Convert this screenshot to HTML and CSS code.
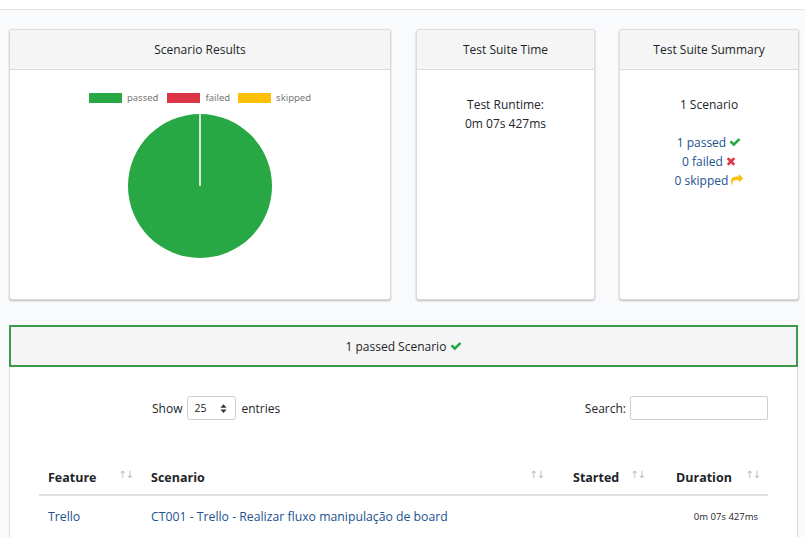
FILE: index.html
```html
<!DOCTYPE html>
<html>
<head>
<meta charset="utf-8">
<link rel="stylesheet" href="styles.css">
</head>
<body>
<div class="topbar"></div>
<div class="summary-row">
  <div class="card card-results">
    <div class="card-header">Scenario Results</div>
    <div class="card-body chart-body">
      <div class="legend">
        <span class="swatch sw-pass"></span><span class="legend-label">passed</span>
        <span class="swatch sw-fail"></span><span class="legend-label">failed</span>
        <span class="swatch sw-skip"></span><span class="legend-label">skipped</span>
      </div>
      <svg class="pie" width="146" height="146" viewBox="0 0 146 146">
        <circle cx="73" cy="73" r="72" fill="#28a745"/>
        <line x1="73" y1="0" x2="73" y2="73" stroke="#ffffff" stroke-width="1.6"/>
      </svg>
    </div>
  </div>
  <div class="card card-time">
    <div class="card-header">Test Suite Time</div>
    <div class="card-body text-body">
      <p>Test Runtime:<br>0m 07s 427ms</p>
    </div>
  </div>
  <div class="card card-summary">
    <div class="card-header">Test Suite Summary</div>
    <div class="card-body text-body">
      <p class="scen-count">1 Scenario</p>
      <p class="counts">
        <a class="lnk">1 passed <svg class="ico" viewBox="0 0 1792 1792"><path fill="#28a745" d="M1671 566q0 40-28 68l-724 724-136 136q-28 28-68 28t-68-28l-136-136-362-362q-28-28-28-68t28-68l136-136q28-28 68-28t68 28l294 295 656-657q28-28 68-28t68 28l136 136q28 28 28 68z"/></svg></a><br>
        <a class="lnk">0 failed <svg class="ico ico-x" viewBox="0 0 1408 1792"><path fill="#dc3545" d="M1298 1322q0 40-28 68l-136 136q-28 28-68 28t-68-28l-294-294-294 294q-28 28-68 28t-68-28l-136-136q-28-28-28-68t28-68l294-294-294-294q-28-28-28-68t28-68l136-136q28-28 68-28t68 28l294 294 294-294q28-28 68-28t68 28l136 136q28 28 28 68t-28 68l-294 294 294 294q28 28 28 68z"/></svg></a><br>
        <a class="lnk">0 skipped <svg class="ico" viewBox="0 0 1792 1792"><path fill="#ffc107" d="M1792 640q0 26-19 45l-512 512q-19 19-45 19t-45-19-19-45v-256h-224q-98 0-175.5 6t-154 21.5-133 42.5-105.5 69.5-80 101-48.5 138.5-17.5 181q0 55 5 123 0 6 2.5 23.5t2.5 26.5q0 15-8.5 25t-23.5 10q-16 0-28-17-7-9-13-22t-13.5-30-10.5-24q-127-285-127-451 0-199 53-333 162-403 875-403h224v-256q0-26 19-45t45-19 45 19l512 512q19 19 19 45z"/></svg></a>
      </p>
    </div>
  </div>
</div>

<div class="passed-panel">
  <div class="passed-header">1 passed Scenario <svg class="ico" viewBox="0 0 1792 1792"><path fill="#28a745" d="M1671 566q0 40-28 68l-724 724-136 136q-28 28-68 28t-68-28l-136-136-362-362q-28-28-28-68t28-68l136-136q28-28 68-28t68 28l294 295 656-657q28-28 68-28t68 28l136 136q28 28 28 68z"/></svg></div>
  <div class="passed-body">
    <div class="dt-controls">
      <div class="dt-length">
        <span>Show</span>
        <span class="fake-select"><span>25</span><svg class="sel-arrows" viewBox="0 0 8 10" width="7" height="9"><path d="M4 0 L7.5 4 H0.5 Z M4 10 L7.5 6 H0.5 Z" fill="#333"/></svg></span>
        <span>entries</span>
      </div>
      <div class="dt-search">
        <span>Search:</span>
        <span class="fake-input"></span>
      </div>
    </div>
    <table class="dt-table">
      <thead>
        <tr>
          <th class="c-feature"><div class="th-inner"><span>Feature</span><span class="sort">↑↓</span></div></th>
          <th class="c-scenario"><div class="th-inner"><span>Scenario</span><span class="sort">↑↓</span></div></th>
          <th class="c-started"><div class="th-inner"><span>Started</span><span class="sort">↑↓</span></div></th>
          <th class="c-duration"><div class="th-inner"><span>Duration</span><span class="sort">↑↓</span></div></th>
        </tr>
      </thead>
      <tbody>
        <tr>
          <td class="c-feature"><a class="lnk">Trello</a></td>
          <td class="c-scenario"><a class="lnk">CT001 - Trello - Realizar fluxo manipulação de board</a></td>
          <td class="c-started"></td>
          <td class="c-duration dur">0m 07s 427ms</td>
        </tr>
      </tbody>
    </table>
  </div>
</div>
</body>
</html>
```

FILE: styles.css
```css
* { box-sizing: border-box; }

html, body {
  margin: 0;
  height: 100%;
}

body {
  background: #f9fafc;
  font-family: "Open Sans", "Noto Sans", sans-serif;
  font-size: 12px;
  color: #212529;
  overflow: hidden;
}

.topbar {
  height: 10px;
  background: #ffffff;
  border-bottom: 1px solid #e4e4e6;
}

.summary-row {
  display: flex;
  padding: 19px 0 0 9px;
}

.card {
  height: 271px;
  background: #ffffff;
  border: 1px solid #dcdcdc;
  border-radius: 3px;
  box-shadow: 0 1px 2px rgba(0, 0, 0, 0.25);
  display: flex;
  flex-direction: column;
}

.card-results { width: 382px; margin-right: 25px; }
.card-time { width: 179px; margin-right: 24px; }
.card-summary { width: 180px; }

.card-header {
  height: 40px;
  line-height: 40px;
  background: #f5f5f5;
  border-bottom: 1px solid #dcdcdc;
  text-align: center;
  font-size: 12px;
  border-radius: 3px 3px 0 0;
}

.card-body {
  flex: 1;
  text-align: center;
}

.chart-body {
  display: flex;
  flex-direction: column;
  align-items: center;
  padding-top: 22px;
}

.legend {
  display: flex;
  align-items: center;
  height: 11px;
  font-family: "Noto Sans", "Open Sans", sans-serif;
  font-size: 9.5px;
  color: #777;
}

.swatch {
  display: inline-block;
  width: 33px;
  height: 10px;
}
.sw-pass { background: #28a745; }
.sw-fail { background: #dc3545; margin-left: 9px; }
.sw-skip { background: #ffc107; margin-left: 8px; }

.legend-label { margin-left: 5px; }

.pie {
  margin-top: 10px;
  display: block;
}

.text-body {
  padding-top: 25px;
  line-height: 19px;
}

.text-body p {
  margin: 0;
}

.text-body .scen-count { margin-bottom: 19px; }

.lnk {
  color: #22528f;
  text-decoration: none;
}

.ico {
  width: 12px;
  height: 12px;
  vertical-align: -1px;
}

.ico-x {
  width: 10px;
}

.passed-panel {
  margin: 25px 0 0 9px;
  width: 789px;
}

.passed-header {
  height: 42px;
  line-height: 39px;
  background: #f5f5f5;
  border: 2px solid #3d9a4c;
  text-align: center;
  font-size: 12px;
}

.passed-body {
  background: #ffffff;
  border-left: 1px solid #dcdcdc;
  border-right: 1px solid #dcdcdc;
  height: 170px;
  overflow: hidden;
  padding: 29px 29px 0 29px;
}

.dt-controls {
  display: grid;
  grid-template-columns: 1fr 1fr;
  align-items: center;
  height: 24px;
}

.dt-length {
  display: flex;
  align-items: center;
  gap: 5px;
  padding-left: 113px;
}

.fake-select {
  display: inline-flex;
  align-items: center;
  justify-content: space-between;
  width: 49px;
  height: 24px;
  border: 1px solid #cfcfcf;
  border-radius: 3px;
  padding: 0 8px 0 6px;
  font-size: 10.5px;
  background: #fff;
}

.dt-search {
  display: flex;
  justify-content: flex-end;
  align-items: center;
  gap: 4px;
}

.fake-input {
  width: 138px;
  height: 24px;
  border: 1px solid #cfcfcf;
  border-radius: 2px;
  background: #fff;
}

.dt-table {
  margin-top: 38px;
  width: 729px;
  border-collapse: collapse;
  table-layout: fixed;
}

.dt-table th {
  font-weight: 700;
  font-size: 12.5px;
  text-align: left;
  padding: 11px 0 8px 9px;
  line-height: 17px;
  border-bottom: 2px solid #dee2e6;
}

.th-inner {
  display: flex;
  justify-content: space-between;
  align-items: flex-start;
}

.sort {
  font-size: 10px;
  line-height: 11px;
  color: #bbbbbb;
  letter-spacing: -1px;
  font-weight: 400;
  font-family: "DejaVu Sans", sans-serif;
  margin-top: 0;
}

.dt-table td {
  padding: 12px 0 9px 9px;
  line-height: 17px;
  font-size: 12.25px;
}

.c-feature { width: 104px; }
.c-scenario { width: 420px; }
.c-started { width: 103px; }
.c-duration { width: 102px; }

th.c-feature { padding-right: 10px; }
th.c-scenario { padding-left: 8px; padding-right: 19px; }
th.c-started { padding-left: 10px; padding-right: 21px; }
th.c-duration { padding-left: 10px; padding-right: 8px; }
td.c-scenario { padding-left: 8px; }

.dt-table td.dur {
  font-size: 9.5px;
  text-align: right;
  padding-right: 10px;
}
```
